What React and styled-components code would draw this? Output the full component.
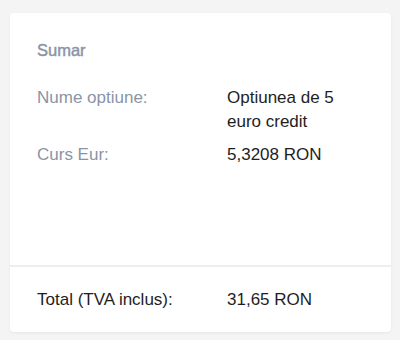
import React from 'react';
import styled, { createGlobalStyle } from 'styled-components';

const GlobalStyle = createGlobalStyle`
    html, body {
        margin: 0;
        background: #f4f4f5;
    }
    body {
        padding: 13px 9px 8px 10px;
        font-family: "Liberation Sans", Arial, sans-serif;
    }
`;

const Card = styled.div`
    display: flex;
    flex-direction: column;
    height: 319px;
    background: #ffffff;
    border-radius: 4px;
    box-shadow: 0 1px 3px rgba(0, 0, 0, 0.06);
`;

const Summary = styled.div`
    flex: 1;
    padding: 25px 27px 0 27px;
`;

const Title = styled.h3`
    margin: 0 0 24px 0;
    font-size: 16.5px;
    line-height: 24px;
    font-weight: 500;
    color: #8a94a6;
    -webkit-text-stroke: 0.45px #8a94a6;
`;

const Row = styled.div`
    display: grid;
    grid-template-columns: 190px 1fr;
    font-size: 17px;
    line-height: 24px;
    margin-bottom: ${props => (props.$last ? '0' : '9px')};
`;

const Label = styled.span`
    color: ${props => (props.$muted ? '#8a94a6' : '#1e1e1e')};
`;

const Value = styled.span`
    color: #1e1e1e;
`;

const Footer = styled.div`
    border-top: 2px solid #eceef2;
    padding: 21px 27px 20px 27px;
`;

const rows = [
    { label: 'Nume optiune:', value: 'Optiunea de 5 euro credit' },
    { label: 'Curs Eur:', value: '5,3208 RON' },
];

const App = () => {
    return (
        <>
            <GlobalStyle />
            <Card>
                <Summary>
                    <Title>Sumar</Title>
                    {rows.map(row => (
                        <Row key={row.label}>
                            <Label $muted>{row.label}</Label>
                            <Value>{row.value}</Value>
                        </Row>
                    ))}
                </Summary>
                <Footer>
                    <Row $last>
                        <Label>Total (TVA inclus):</Label>
                        <Value>31,65 RON</Value>
                    </Row>
                </Footer>
            </Card>
        </>
    );
};

export default App;
